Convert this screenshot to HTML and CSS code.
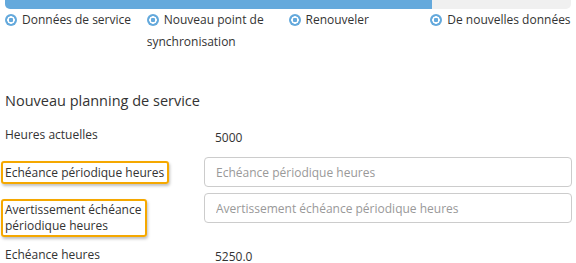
FILE: index.html
```html
<!DOCTYPE html>
<html lang="fr">
<head>
<meta charset="utf-8">
<link rel="stylesheet" href="styles.css">
</head>
<body>
<div class="progress"><div class="progress-fill" style="width:75.4%"></div></div>
<div class="steps">
  <div class="step"><span class="dot"></span>Données de service</div>
  <div class="step"><span class="dot"></span>Nouveau point de synchronisation</div>
  <div class="step"><span class="dot"></span>Renouveler</div>
  <div class="step step-last"><span class="dot"></span>De nouvelles données</div>
</div>
<h2 class="title">Nouveau planning de service</h2>
<div class="form">
  <div class="row row-static">
    <div class="label">Heures actuelles</div>
    <div class="value">5000</div>
  </div>
  <div class="row row-input row-one">
    <div class="label"><span class="hl hl-one">Echéance périodique heures</span></div>
    <input class="field" type="text" placeholder="Echéance périodique heures">
  </div>
  <div class="row row-input row-two">
    <div class="label"><span class="hl hl-two">Avertissement échéance périodique heures</span></div>
    <input class="field" type="text" placeholder="Avertissement échéance périodique heures">
  </div>
  <div class="row row-last">
    <div class="label">Echéance heures</div>
    <div class="value">5250.0</div>
  </div>
</div>
</body>
</html>
```
FILE: styles.css
```css
html, body {
  margin: 0;
  padding: 0;
  background: #fff;
}
body {
  padding: 0 4px 0 5px;
  font-family: "Open Sans", "Noto Sans", sans-serif;
  font-size: 12px;
  color: #333;
}
.progress {
  height: 9px;
  background: #f0f0f0;
  border-radius: 0 0 5px 5px;
  overflow: hidden;
  margin-right: 1px;
}
.progress-fill {
  height: 100%;
  background: #64a9dc;
}
.steps {
  display: grid;
  grid-template-columns: repeat(4, 1fr);
}
.step {
  line-height: 22px;
  padding-right: 6px;
}
.step-last {
  padding-right: 0;
  white-space: nowrap;
}
.dot {
  display: inline-block;
  width: 12px;
  height: 12px;
  margin-right: 5px;
  vertical-align: -2px;
  border-radius: 50%;
  background: radial-gradient(circle, #64a9dc 0 2px, #fff 2.5px 3.5px, #64a9dc 4px);
}
.title {
  margin: 38px 0 0;
  font-size: 14.5px;
  font-weight: normal;
  line-height: 20px;
}
.form {
  margin-top: 16px;
}
.row {
  display: grid;
  grid-template-columns: 199px 1fr;
  align-items: start;
}
.label {
  line-height: 16px;
}
.value {
  padding-left: 11px;
  line-height: 16px;
}
.row-static {
  margin-bottom: 11px;
}
.row-static .value {
  padding-top: 3px;
}
.row-one {
  margin-bottom: 6px;
}
.row-one .label {
  padding-top: 4px;
}
.row-two .label {
  padding-top: 6px;
}
.hl {
  display: inline-block;
  margin-left: -4px;
  border: 2px solid #f5a800;
  border-radius: 3px;
  box-shadow: 1px 2px 3px rgba(0,0,0,0.25);
}
.hl-one {
  padding: 2px 3px 1px 2px;
}
.hl-two {
  width: 138px;
  padding: 1px 2px;
}
.field {
  box-sizing: border-box;
  width: 100%;
  height: 30px;
  padding: 0 11px;
  border: 1px solid #ccc;
  border-radius: 4px;
  font: inherit;
  color: #333;
  outline: none;
}
.field::placeholder {
  color: #999;
}
.row-last {
  margin-top: 10px;
}
.row-last .value {
  padding-top: 2px;
}
```
